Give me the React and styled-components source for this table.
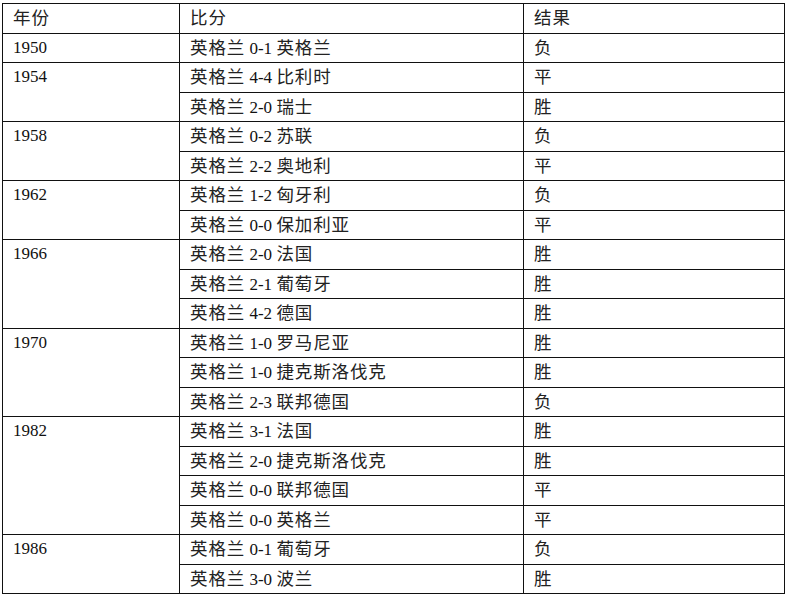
import React from "react";
import styled, { createGlobalStyle } from "styled-components";

const Global = createGlobalStyle`
  html, body { margin: 0; padding: 0; background: #fff; }
  body { font-family: "Liberation Serif", "Noto Sans CJK SC", serif; color: #111; }
`;

const Page = styled.div`
  padding: 3px 0 0 2px;
`;

const Table = styled.table`
  width: 782px;
  border-collapse: collapse;
  table-layout: fixed;
  font-family: "Liberation Serif", "Noto Sans CJK SC", serif;
  font-size: 17px;
  color: #111;
`;

const Row = styled.tr`
  height: 29.5px;
`;

const Cell = styled.td`
  border: 1px solid #111;
  padding: ${(p) => (p.$top ? "5px" : "0")} 0 0 10px;
  vertical-align: ${(p) => (p.$top ? "top" : "middle")};
  line-height: 18px;
  white-space: nowrap;
`;

const HeadCell = styled(Cell).attrs({ as: "th" })`
  font-weight: normal;
  text-align: left;
`;

const Han = styled.span`
  font-family: "Noto Sans CJK SC", sans-serif;
  font-size: 17.5px;
  line-height: 18px;
  color: #222;
  letter-spacing: 0.9px;
`;

function Text({ children }) {
  const parts = children.split(/([\u4e00-\u9fff]+)/).filter(Boolean);
  return parts.map((p, i) =>
    /[\u4e00-\u9fff]/.test(p) ? <Han key={i}>{p}</Han> : <span key={i}>{p}</span>
  );
}

const data = [
  ["1950", [["英格兰 0-1 英格兰", "负"]]],
  ["1954", [["英格兰 4-4 比利时", "平"], ["英格兰 2-0 瑞士", "胜"]]],
  ["1958", [["英格兰 0-2 苏联", "负"], ["英格兰 2-2 奥地利", "平"]]],
  ["1962", [["英格兰 1-2 匈牙利", "负"], ["英格兰 0-0 保加利亚", "平"]]],
  ["1966", [["英格兰 2-0 法国", "胜"], ["英格兰 2-1 葡萄牙", "胜"], ["英格兰 4-2 德国", "胜"]]],
  ["1970", [["英格兰 1-0 罗马尼亚", "胜"], ["英格兰 1-0 捷克斯洛伐克", "胜"], ["英格兰 2-3 联邦德国", "负"]]],
  ["1982", [["英格兰 3-1 法国", "胜"], ["英格兰 2-0 捷克斯洛伐克", "胜"], ["英格兰 0-0 联邦德国", "平"], ["英格兰 0-0 英格兰", "平"]]],
  ["1986", [["英格兰 0-1 葡萄牙", "负"], ["英格兰 3-0 波兰", "胜"]]],
];

export default function App() {
  return (
    <Page>
      <Global />
      <Table>
        <colgroup>
          <col style={{ width: 177 }} />
          <col style={{ width: 344 }} />
          <col style={{ width: 261 }} />
        </colgroup>
        <thead>
          <Row>
            <HeadCell><Text>年份</Text></HeadCell>
            <HeadCell><Text>比分</Text></HeadCell>
            <HeadCell><Text>结果</Text></HeadCell>
          </Row>
        </thead>
        <tbody>
          {data.map(([year, games]) =>
            games.map(([score, res], i) => (
              <Row key={year + i}>
                {i === 0 && (
                  <Cell rowSpan={games.length} $top>
                    {year}
                  </Cell>
                )}
                <Cell><Text>{score}</Text></Cell>
                <Cell><Text>{res}</Text></Cell>
              </Row>
            ))
          )}
        </tbody>
      </Table>
    </Page>
  );
}
